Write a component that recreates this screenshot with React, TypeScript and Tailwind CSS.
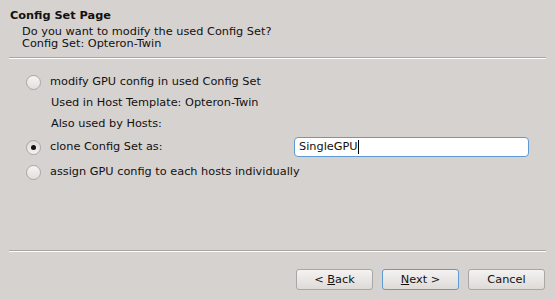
function Radio({ checked }: { checked?: boolean }) {
  return (
    <span
      className={`flex h-[15px] w-[15px] shrink-0 items-center justify-center rounded-full border border-[#a9a6a3] ${
        checked
          ? "bg-gradient-to-b from-[#dedbd8] to-[#f4f3f2]"
          : "bg-gradient-to-b from-[#f6f5f4] to-[#e2dfdc]"
      }`}
    >
      {checked && <span className="h-[5px] w-[5px] rounded-full bg-[#111]" />}
    </span>
  );
}

function Button({
  children,
  focused,
}: {
  children: React.ReactNode;
  focused?: boolean;
}) {
  return (
    <button
      className={`h-[21px] w-[77px] rounded-[3px] border bg-gradient-to-b from-[#f4f3f2] to-[#dedad7] text-[11.3px] leading-none text-[#111] ${
        focused ? "border-[#5d9ad6]" : "border-[#a9a6a3]"
      }`}
    >
      {children}
    </button>
  );
}

export default function App() {
  return (
    <div
      className="flex h-[300px] w-[555px] flex-col bg-[#d6d2d0] text-[11.3px] text-[#111]"
      style={{ fontFamily: '"DejaVu Sans", sans-serif' }}
    >
      {/* Header */}
      <div className="pl-[10px] pt-[9px]">
        <p className="font-bold leading-[14px]">Config Set Page</p>
        <div className="mt-[3px] pl-[12px] leading-[12px]">
          <p>Do you want to modify the used Config Set?</p>
          <p>Config Set: Opteron-Twin</p>
        </div>
      </div>
      <div className="mx-[9px] mt-[7px] border-t border-b border-t-[#aaa6a3] border-b-white" />

      {/* Options */}
      <div className="flex flex-col px-[26px]">
        <div className="mt-[13px] flex h-[20px] items-center gap-[9px]">
          <Radio />
          <span>modify GPU config in used Config Set</span>
        </div>
        <div className="mt-[1px] flex h-[20px] items-center pl-[25px]">
          Used in Host Template: Opteron-Twin
        </div>
        <div className="mt-[1px] flex h-[20px] items-center pl-[25px]">
          Also used by Hosts:
        </div>
        <div className="mt-[3px] flex h-[20px] items-center">
          <div className="flex w-[268px] items-center gap-[9px]">
            <Radio checked />
            <span>clone Config Set as:</span>
          </div>
          <div className="flex h-[20px] flex-1 items-center rounded-[4px] border border-[#5d9ad6] bg-white pl-[4px]">
            <span>SingleGPU</span>
            <span className="h-[14px] w-px bg-black" />
          </div>
        </div>
        <div className="mt-[5px] flex h-[20px] items-center gap-[9px]">
          <Radio />
          <span>assign GPU config to each hosts individually</span>
        </div>
      </div>

      <div className="flex-1" />

      {/* Footer */}
      <div className="mx-[9px] border-t border-b border-t-[#aaa6a3] border-b-white" />
      <div className="mb-[10px] mt-[17px] flex justify-end gap-[9px] pr-[10px]">
        <Button>
          &lt; <span className="underline">B</span>ack
        </Button>
        <Button focused>
          <span className="underline">N</span>ext &gt;
        </Button>
        <Button>Cancel</Button>
      </div>
    </div>
  );
}
